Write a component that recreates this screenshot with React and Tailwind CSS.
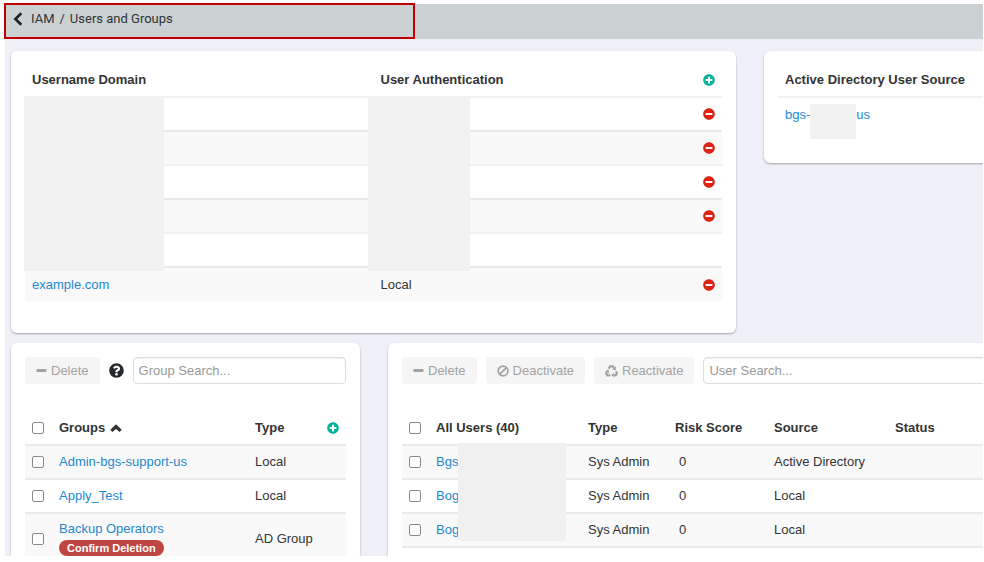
import { useState } from "react";
import { FaMinusCircle, FaPlusCircle, FaQuestionCircle } from "react-icons/fa";

const domains = [
    { name: "", auth: "", removable: true },
    { name: "", auth: "", removable: true },
    { name: "", auth: "", removable: true },
    { name: "", auth: "", removable: true },
    { name: "", auth: "", removable: false },
    { name: "example.com", auth: "Local", removable: true },
];

const groups = [
    { name: "Admin-bgs-support-us", type: "Local" },
    { name: "Apply_Test", type: "Local" },
    { name: "Backup Operators", type: "AD Group", pendingDelete: true },
];

const users = [
    { name: "Bgs", type: "Sys Admin", risk: 0, source: "Active Directory" },
    { name: "Bog", type: "Sys Admin", risk: 0, source: "Local" },
    { name: "Bog", type: "Sys Admin", risk: 0, source: "Local" },
];

const BackIcon = () => (
    <svg viewBox="0 0 10 14" className="w-[10px] h-[14px]" fill="none" stroke="currentColor" strokeWidth="2.6">
        <path d="M8.3 1.2 2.4 7l5.9 5.8" />
    </svg>
);

const SortIcon = () => (
    <svg viewBox="0 0 12 8" className="w-3 h-2" fill="currentColor">
        <path d="M6 .2 11.7 5.8 9.6 7.9 6 4.9 2.4 7.9.3 5.8z" />
    </svg>
);

const MinusIcon = () => (
    <svg viewBox="0 0 11 12" className="w-[11px] h-3" fill="currentColor">
        <rect x=".5" y="4" width="10" height="3" rx=".8" />
    </svg>
);

const BanIcon = () => (
    <svg viewBox="0 0 12 12" className="w-3 h-3" fill="none" stroke="currentColor" strokeWidth="1.7">
        <circle cx="6" cy="6" r="4.9" />
        <path d="M2.6 9.4 9.4 2.6" />
    </svg>
);

const RecycleIcon = () => (
    <svg viewBox="0 0 13 12" className="w-[13px] h-3" fill="none" stroke="currentColor" strokeWidth="2.2">
        <path d="M3.6 3.8 5 1.4h3l.9 1.5M11 6.4l1 1.9-1.2 2H8.4M5.4 10.3H2.3L1.1 8.4l1-1.7" />
        <path fill="currentColor" stroke="none" d="M10.8 1.2v4L7 4.6zM8.8 7.7v4.3L6.2 10.2zM0 5.7 3.5 4.7l.9 3.5z" />
    </svg>
);

const ToolButton = ({ icon, children }) => (
    <button type="button" disabled className="h-[27px] shrink-0 px-[11px] flex items-center gap-1 rounded bg-[#f5f5f5] text-[#a3a3a3]">
        {icon} {children}
    </button>
);

const SearchBox = ({ label }) => (
    <input
        type="text" aria-label={label} placeholder={`${label}...`}
        className="h-[27px] min-w-0 flex-1 px-[5px] rounded border border-[#dedede] bg-white shadow-[inset_0_1px_1px_#00000010] outline-none placeholder:text-[#999999]"
    />
);

const CheckCell = ({ label, header }) => {
    const Cell = header ? "th" : "td";
    return (
        <Cell className="w-[27px] pl-[7px] text-left align-middle">
            <input type="checkbox" aria-label={label} className="block w-[12px] h-[12px] rounded-[2px] appearance-none border border-[#8a8a8a] bg-white checked:bg-[#1e88cf]" />
        </Cell>
    );
};

const Row = ({ shaded, strong, children }) => (
    <tr className={`h-[34px] border-t-2 ${strong ? "border-[#e9e9e9]" : "border-[#f1f1f1]"} ${shaded ? "bg-[#f9f9f9]" : "bg-white"}`}>
        {children}
    </tr>
);

export default function App() {
    const [sortUp] = useState(true);

    return (
        <div className="h-screen w-full flex flex-col bg-white pt-1 pl-[5px] pr-px pb-1.5 font-['Liberation_Sans',Arial,sans-serif] text-[13px] leading-4 text-[#333333]">

            {/* Breadcrumb bar */}
            <header className="h-[35px] shrink-0 flex bg-[#cbd0d2]">
                <nav className="-ml-px -mt-px h-9 w-[42%] flex items-center gap-2 border-2 border-[#c00000] pl-[7px] pb-1 font-[Roboto,sans-serif] text-[13px] text-[#2f3437]">
                    <a href="#back" aria-label="Back" className="text-[#1c2126]"><BackIcon /></a>
                    <span className="flex gap-[5px]">
                        <a href="#iam">IAM</a>
                        <span>/</span>
                        <span>Users and Groups</span>
                    </span>
                </nav>
            </header>

            <main className="flex-1 min-h-0 overflow-hidden flex flex-col gap-[10px] bg-[#efeff8] pl-1.5 pt-3">
                <div className="shrink-0 grid grid-cols-[725fr_219fr] gap-7 items-start">

                    {/* Username domains */}
                    <section className="rounded-md bg-white shadow-[0_1px_2px_#00000050] px-[14px] pt-[13px] pb-8">
                        <div className="relative">
                            <table className="w-full table-fixed border-collapse">
                                <thead>
                                    <tr className="h-[33px]">
                                        <th className="w-1/2 px-[7px] text-left font-bold">Username Domain</th>
                                        <th className="px-[7px] text-left font-bold">User Authentication</th>
                                        <th className="w-[26px]">
                                            <button type="button" aria-label="Add domain" className="block mx-auto text-[#07b29c]"><FaPlusCircle size={12} /></button>
                                        </th>
                                    </tr>
                                </thead>
                                <tbody>
                                    {domains.map((domain, i) => (
                                        <Row key={i} shaded={i % 2 === 1} strong={i % 2 === 1}>
                                            <td className="px-[7px]">
                                                {domain.name && <a href="#domain" className="text-[#1e88cf]">{domain.name}</a>}
                                            </td>
                                            <td className="px-[7px]">{domain.auth}</td>
                                            <td>
                                                {domain.removable && (
                                                    <button type="button" aria-label="Remove domain" className="block mx-auto text-[#dd2414]"><FaMinusCircle size={12} /></button>
                                                )}
                                            </td>
                                        </Row>
                                    ))}
                                </tbody>
                            </table>
                            <div className="absolute -left-px top-[33px] w-[140px] h-[174px] bg-[#f1f1f1]"></div>
                            <div className="absolute left-[343px] top-[33px] w-[102px] h-[174px] bg-[#f1f1f1]"></div>
                        </div>
                    </section>

                    {/* Active Directory source */}
                    <section className="rounded-l-md bg-white shadow-[0_1px_2px_#00000050] pl-[14px] pt-[13px] pb-8">
                        <table className="w-full border-collapse">
                            <thead>
                                <tr className="h-[33px]">
                                    <th className="px-[7px] text-left font-bold whitespace-nowrap">Active Directory User Source</th>
                                </tr>
                            </thead>
                            <tbody>
                                <Row>
                                    <td className="px-[7px]">
                                        <a href="#source" className="flex text-[#1e88cf]">
                                            bgs-
                                            <span className="relative w-[46px]">
                                                <span className="absolute left-0 -top-[3px] w-full h-[35px] bg-[#f1f1f1]"></span>
                                            </span>
                                            us
                                        </a>
                                    </td>
                                </Row>
                            </tbody>
                        </table>
                    </section>
                </div>

                <div className="flex-1 grid grid-cols-[349fr_595fr] gap-7">

                    {/* Groups */}
                    <section className="min-w-0 rounded-t-md bg-white shadow-[0_1px_2px_#00000050] px-[14px] pt-[14px]">
                        <div className="flex items-center gap-[9px] mb-7">
                            <ToolButton icon={<MinusIcon />}>Delete</ToolButton>
                            <button type="button" aria-label="Help" className="text-[#262a2e]"><FaQuestionCircle size={15} /></button>
                            <SearchBox label="Group Search" />
                        </div>
                        <table className="w-full table-fixed border-collapse">
                            <thead>
                                <tr className="h-[33px]">
                                    <CheckCell header label="Select all groups" />
                                    <th className="px-[7px] text-left font-bold">
                                        <button type="button" className="flex items-center gap-[5px] font-bold">Groups {sortUp && <SortIcon />}</button>
                                    </th>
                                    <th className="w-[72px] px-[7px] text-left font-bold">Type</th>
                                    <th className="w-[26px]">
                                        <button type="button" aria-label="Add group" className="block mx-auto text-[#07b29c]"><FaPlusCircle size={12} /></button>
                                    </th>
                                </tr>
                            </thead>
                            <tbody>
                                {groups.map((group, i) => (
                                    <Row key={group.name} shaded={i % 2 === 0} strong>
                                        <CheckCell label={`Select ${group.name}`} />
                                        <td className="px-[7px] py-[7px]">
                                            <a href="#group" className="block text-[#1e88cf]">{group.name}</a>
                                            {group.pendingDelete && (
                                                <span className="block w-fit mt-[3px] px-2 rounded-full bg-[#bf4644] text-white text-[11px] font-bold whitespace-nowrap">Confirm Deletion</span>
                                            )}
                                        </td>
                                        <td colSpan={2} className="px-[7px]">{group.type}</td>
                                    </Row>
                                ))}
                            </tbody>
                        </table>
                    </section>

                    {/* Users */}
                    <section className="min-w-0 rounded-tl-md bg-white shadow-[0_1px_2px_#00000050] pl-[14px] pt-[14px]">
                        <div className="-mr-2 flex items-center gap-[9px] mb-7">
                            <ToolButton icon={<MinusIcon />}>Delete</ToolButton>
                            <ToolButton icon={<BanIcon />}>Deactivate</ToolButton>
                            <ToolButton icon={<RecycleIcon />}>Reactivate</ToolButton>
                            <SearchBox label="User Search" />
                        </div>
                        <div className="relative">
                            <table className="w-full table-fixed border-collapse">
                                <thead>
                                    <tr className="h-[33px]">
                                        <CheckCell header label="Select all users" />
                                        <th className="w-[152px] px-[7px] text-left font-bold">All Users (40)</th>
                                        <th className="w-[87px] px-[7px] text-left font-bold">Type</th>
                                        <th className="w-[99px] px-[7px] text-left font-bold">Risk Score</th>
                                        <th className="w-[121px] px-[7px] text-left font-bold">Source</th>
                                        <th className="px-[7px] text-left font-bold">Status</th>
                                    </tr>
                                </thead>
                                <tbody className="border-b-2 border-[#e9e9e9]">
                                    {users.map((user, i) => (
                                        <Row key={i} shaded={i % 2 === 0} strong>
                                            <CheckCell label={`Select user ${i + 1}`} />
                                            <td className="px-[7px]"><a href="#user" className="text-[#1e88cf]">{user.name}</a></td>
                                            <td className="px-[7px]">{user.type}</td>
                                            <td className="px-[11px]">{user.risk}</td>
                                            <td className="px-[7px]">{user.source}</td>
                                            <td></td>
                                        </Row>
                                    ))}
                                </tbody>
                            </table>
                            <div className="absolute left-14 top-[31px] w-[108px] h-[98px] bg-[#f0f0f0]"></div>
                        </div>
                    </section>
                </div>
            </main>
        </div>
    );
}
